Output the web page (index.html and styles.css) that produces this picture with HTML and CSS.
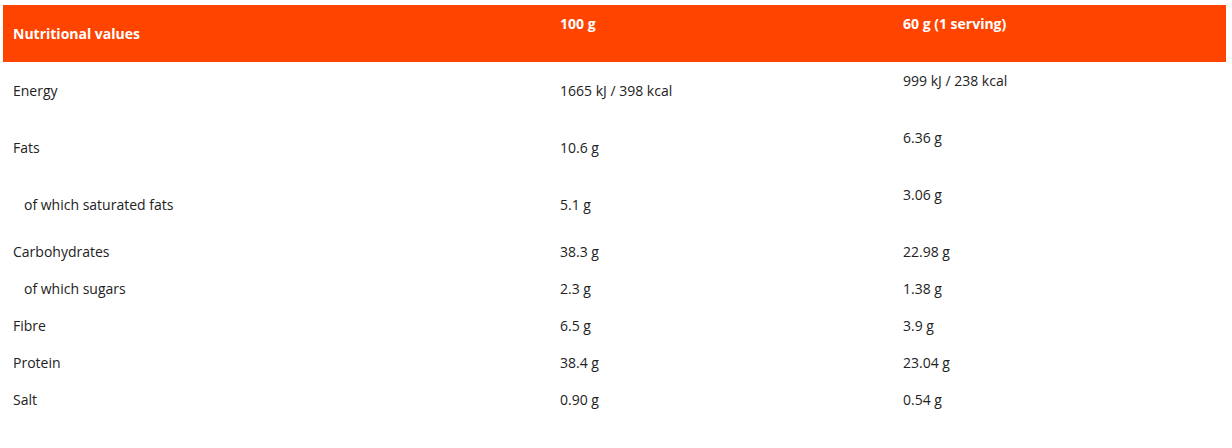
FILE: index.html
```html
<!DOCTYPE html>
<html lang="en">
<head>
<meta charset="utf-8">
<title>Nutritional values</title>
<link rel="stylesheet" href="styles.css">
</head>
<body>
<table class="nutri">
  <colgroup>
    <col class="c1">
    <col class="c2">
    <col class="c3">
  </colgroup>
  <thead>
    <tr>
      <th>Nutritional values</th>
      <th class="top">100 g</th>
      <th class="top">60 g (1 serving)</th>
    </tr>
  </thead>
  <tbody>
    <tr><td>Energy</td><td>1665 kJ / 398 kcal</td><td class="top">999 kJ / 238 kcal</td></tr>
    <tr><td>Fats</td><td>10.6 g</td><td class="top">6.36 g</td></tr>
    <tr><td class="sub">of which saturated fats</td><td>5.1 g</td><td class="top">3.06 g</td></tr>
    <tr><td>Carbohydrates</td><td>38.3 g</td><td>22.98 g</td></tr>
    <tr><td class="sub">of which sugars</td><td>2.3 g</td><td>1.38 g</td></tr>
    <tr><td>Fibre</td><td>6.5 g</td><td>3.9 g</td></tr>
    <tr><td>Protein</td><td>38.4 g</td><td>23.04 g</td></tr>
    <tr><td>Salt</td><td>0.90 g</td><td>0.54 g</td></tr>
  </tbody>
</table>
</body>
</html>
```
FILE: styles.css
```css
html, body {
  margin: 0;
  padding: 0;
  background: #ffffff;
}

body {
  font-family: "Open Sans", "Liberation Sans", Arial, sans-serif;
  font-size: 14px;
  line-height: 20px;
  color: #222222;
}

.nutri {
  margin: 5px 0 0 3px;
  width: 1223px;
  border-collapse: collapse;
  table-layout: fixed;
}

.c1 { width: 547px; }
.c2 { width: 343px; }
.c3 { width: 333px; }

.nutri th,
.nutri td {
  padding: 9px 10px 8px 10px;
  text-align: left;
  vertical-align: middle;
}

.nutri thead tr {
  background: #ff4400;
}

.nutri th {
  color: #ffffff;
  font-weight: 700;
}

.nutri .top {
  padding-bottom: 28px;
}

.nutri .sub {
  padding-left: 21px;
}
```
